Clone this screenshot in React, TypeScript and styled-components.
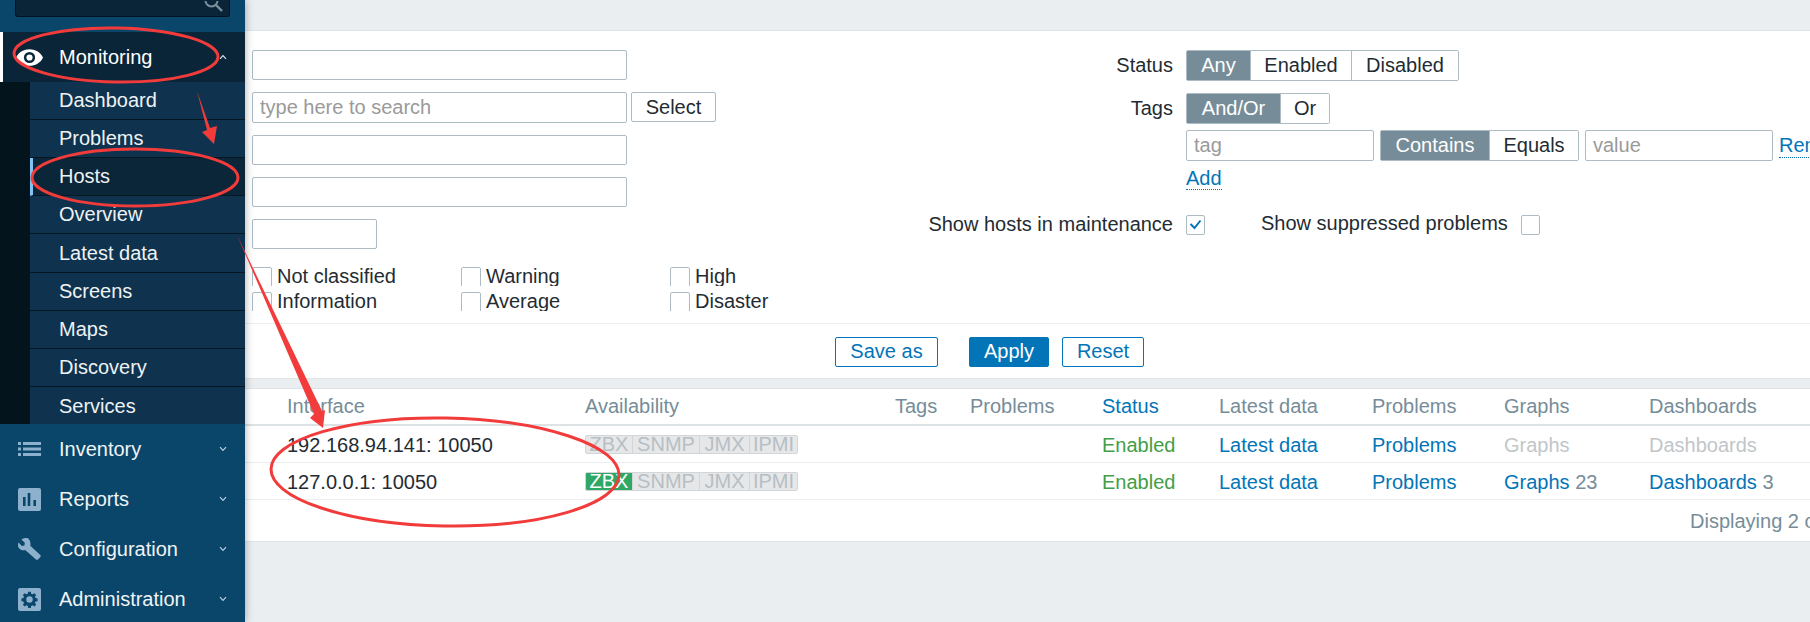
import React from 'react';
import styled, { createGlobalStyle } from 'styled-components';

const Global = createGlobalStyle`
  html, body { margin: 0; padding: 0; height: 622px; overflow: hidden; background: #ebeef0; }
  body { font-family: "Liberation Sans", Arial, sans-serif; font-size: 20px; color: #1f2c33; }
  * { box-sizing: border-box; }
`;

const Page = styled.div`
  position: relative;
  display: flex;
  width: 1810px;
  height: 622px;
  overflow: hidden;
`;

const Sidebar = styled.nav`
  position: relative;
  z-index: 1;
  flex: 0 0 245px;
  height: 622px;
  background: #0a466a;
  box-shadow: 0 0 8px rgba(0, 0, 0, 0.35);
`;

const SearchArea = styled.div`
  height: 32px;
  padding: 0 15px;
`;

const SearchBox = styled.div`
  display: flex;
  justify-content: flex-end;
  align-items: flex-end;
  height: 17px;
  padding: 0 6px 4px 0;
  background: #0a2538;
  border: 1px solid #04141e;
  border-top: 0;
  border-radius: 0 0 3px 3px;
`;

const MenuHead = styled.div<{ $active?: boolean }>`
  display: flex;
  align-items: center;
  height: 50px;
  padding-left: ${p => (p.$active ? '13px' : '18px')};
  background: ${p => (p.$active ? '#0a2538' : 'transparent')};
  border-left: ${p => (p.$active ? '3px solid #fff' : '0')};
  color: ${p => (p.$active ? '#fff' : '#f0f3f5')};
`;

const MenuIcon = styled.span<{ $active?: boolean }>`
  display: flex;
  flex: 0 0 ${p => (p.$active ? '43px' : '41px')};
  align-items: center;
`;

const MenuText = styled.span`
  flex: 1;
`;

const Chevron = styled.svg`
  flex: 0 0 8px;
  margin-right: 18px;
`;

const SubMenu = styled.div`
  height: 342px;
  padding-left: 30px;
  background: #03141d;
`;

const SubItem = styled.div<{ $current?: boolean; $h: number }>`
  display: flex;
  align-items: center;
  height: ${p => p.$h}px;
  padding-left: ${p => (p.$current ? '26px' : '29px')};
  border-left: ${p => (p.$current ? '3px solid #7fc4f5' : '0')};
  border-bottom: 1px solid #041723;
  background: ${p => (p.$current ? '#0b2639' : '#0f334e')};
  color: #eef2f4;
  &:last-child { border-bottom: 0; padding-top: 2px; }
`;

const Main = styled.main`
  flex: 1;
  min-width: 0;
  padding-top: 30px;
`;

const FilterPanel = styled.section`
  height: 349px;
  background: #fff;
  border-top: 1px solid #dfe4e7;
  border-bottom: 1px solid #dfe4e7;
`;

const FilterBody = styled.div`
  display: flex;
  height: 292px;
`;

const LeftCol = styled.div`
  display: flex;
  flex: 0 0 655px;
  flex-direction: column;
  padding: 19px 0 0 7px;
`;

const Field = styled.div<{ $gap: number }>`
  display: flex;
  gap: 4px;
  margin-bottom: ${p => p.$gap}px;
`;

const TextInput = styled.div<{ $w: number; $h?: number }>`
  display: flex;
  align-items: center;
  flex: 0 0 ${p => p.$w}px;
  height: ${p => p.$h ?? 30}px;
  padding-left: 7px;
  background: #fff;
  border: 1px solid #acbbc4;
  border-radius: 2px;
  color: #9a9a9a;
`;

const PlainButton = styled.div`
  display: flex;
  align-items: center;
  justify-content: center;
  width: 85px;
  height: 30px;
  background: #fff;
  border: 1px solid #acbbc4;
  border-radius: 2px;
`;

const SeverityGrid = styled.div`
  display: grid;
  grid-template-columns: repeat(3, 209px);
  grid-auto-rows: 19px;
  row-gap: 6px;
  margin-top: -1px;
`;

const Severity = styled.div`
  display: flex;
  gap: 5px;
  height: 19px;
  overflow: hidden;
  line-height: 19px;
`;

const OpenBox = styled.span`
  flex: 0 0 20px;
  height: 26px;
  border: 1px solid #acbbc4;
  border-radius: 2px;
`;

const RightCol = styled.div`
  display: flex;
  flex: 1;
  flex-direction: column;
  padding-top: 19px;
`;

const FormRow = styled.div<{ $mb: number }>`
  display: flex;
  align-items: center;
  gap: 13px;
  margin-bottom: ${p => p.$mb}px;
`;

const Label = styled.span`
  flex: 0 0 273px;
  text-align: right;
`;

const Seg = styled.div`
  display: flex;
  height: 31px;
  background: #fff;
  border: 1px solid #acbbc4;
  border-radius: 2px;
`;

const SegItem = styled.div<{ $on?: boolean; $w: number }>`
  display: flex;
  align-items: center;
  justify-content: center;
  width: ${p => p.$w}px;
  background: ${p => (p.$on ? '#768d99' : '#fff')};
  color: ${p => (p.$on ? '#fff' : '#1f2c33')};
  & + & { border-left: ${p => (p.$on ? '0' : '1px solid #acbbc4')}; }
`;

const TagRow = styled.div`
  display: flex;
  align-items: center;
  gap: 6px;
  height: 31px;
  margin: -6px 0 0 286px;
  white-space: nowrap;
`;

const Link = styled.span`
  color: #0275b8;
  border-bottom: 1px dotted #0275b8;
  line-height: 24px;
`;

const AddRow = styled.div`
  margin: 4px 0 17px 286px;
  height: 30px;
  padding-top: 1px;
`;

const CheckRow = styled.div`
  display: flex;
  align-items: center;
  gap: 13px;
`;

const CheckBox = styled.span`
  display: flex;
  align-items: center;
  justify-content: center;
  flex: 0 0 19px;
  height: 20px;
  background: #fff;
  border: 1px solid #acbbc4;
  border-radius: 2px;
`;

const SuppressedLabel = styled.span`
  margin-left: 43px;
  padding-bottom: 2px;
`;

const ButtonBar = styled.div`
  display: flex;
  align-items: flex-start;
  height: 55px;
  padding: 13px 0 0 590px;
  border-top: 1px solid #ebeef0;
`;

const ActionButton = styled.div<{ $primary?: boolean; $w: number; $ml: number }>`
  display: flex;
  align-items: center;
  justify-content: center;
  width: ${p => p.$w}px;
  height: 30px;
  padding-bottom: 2px;
  margin-left: ${p => p.$ml}px;
  background: ${p => (p.$primary ? '#0275b8' : '#fff')};
  border: 1px solid #0275b8;
  border-radius: 2px;
  color: ${p => (p.$primary ? '#fff' : '#0275b8')};
`;

const TablePanel = styled.section`
  height: 154px;
  margin-top: 9px;
  background: #fff;
  border-top: 1px solid #dfe4e7;
  border-bottom: 1px solid #dfe4e7;
`;

const Row = styled.div<{ $h: number; $bw: number; $bc: string; $shift?: number }>`
  display: grid;
  grid-template-columns: 298px 310px 75px 132px 117px 153px 132px 145px 1fr;
  align-items: center;
  height: ${p => p.$h}px;
  padding: ${p => p.$shift ?? 0}px 0 0 42px;
  border-bottom: ${p => p.$bw}px solid ${p => p.$bc};
  white-space: nowrap;
`;

const Head = styled.span<{ $link?: boolean }>`
  color: ${p => (p.$link ? '#0275b8' : '#768d99')};
`;

const Cell = styled.span<{ $tone?: 'green' | 'link' | 'mute' }>`
  color: ${p =>
    p.$tone === 'green' ? '#429e47' : p.$tone === 'link' ? '#0275b8' : p.$tone === 'mute' ? '#c1c6c9' : '#1f2c33'};
`;

const Count = styled.span`
  color: #768d99;
`;

const Avail = styled.div`
  display: flex;
  width: 213px;
  height: 19px;
  margin-top: -2px;
  background: #e6e7e8;
  border: 1px solid #d3d6d8;
  border-radius: 2px;
  line-height: 19px;
  overflow: hidden;
`;

const AvailCell = styled.span<{ $w: number; $ok?: boolean }>`
  display: flex;
  justify-content: center;
  align-items: center;
  flex: 0 0 ${p => p.$w}px;
  background: ${p => (p.$ok ? '#2fa866' : 'transparent')};
  color: ${p => (p.$ok ? '#fff' : '#b6bfc4')};
  border-right: 1px solid #d3d6d8;
  &:last-child { border-right: 0; }
`;

const Footer = styled.div`
  padding: 10px 0 0 1445px;
  color: #768d99;
  white-space: nowrap;
`;

const Overlay = styled.svg`
  position: absolute;
  top: 0;
  left: 0;
  z-index: 2;
  pointer-events: none;
`;

const ICON = '#8db1cd';

const Down = () => (
  <Chevron width="8" height="6" viewBox="0 0 8 6">
    <path d="M1 1.2 4 4.4 7 1.2" fill="none" stroke="#b9cfdf" strokeWidth="1.2" />
  </Chevron>
);
const Up = () => (
  <Chevron width="8" height="6" viewBox="0 0 8 6">
    <path d="M1 4.8 4 1.6 7 4.8" fill="none" stroke="#d7e2ea" strokeWidth="1.2" />
  </Chevron>
);

const Eye = () => (
  <svg width="27" height="17" viewBox="0 0 27 17">
    <path d="M0 8.5C5-2.6 22-2.6 27 8.5 22 19.6 5 19.6 0 8.5Z" fill="#fff" />
    <circle cx="13.5" cy="8.5" r="5.6" fill="#0a2538" />
    <circle cx="13.5" cy="8.5" r="3.1" fill="#fff" />
  </svg>
);
const ListIcon = () => (
  <svg width="23" height="14" viewBox="0 0 23 14" fill={ICON}>
    <rect x="0" y="0" width="3" height="3" />
    <rect x="0" y="5.5" width="3" height="3" />
    <rect x="0" y="11" width="3" height="3" />
    <rect x="5" y="0" width="18" height="3" />
    <rect x="5" y="5.5" width="18" height="3" />
    <rect x="5" y="11" width="18" height="3" />
  </svg>
);
const ReportIcon = () => (
  <svg width="23" height="23" viewBox="0 0 23 23">
    <rect width="23" height="23" rx="2" fill={ICON} />
    <rect x="5" y="9" width="2.6" height="9" fill="#0a466a" />
    <rect x="9.7" y="5" width="2.6" height="13" fill="#0a466a" />
    <rect x="15.4" y="12" width="2.6" height="6" fill="#0a466a" />
  </svg>
);
const WrenchIcon = () => (
  <svg width="23" height="22" viewBox="0 0 23 22">
    <path d="M9.4 0C6.6-.4 4.2.8 3.4 1.6l3.4 3.2-.4 2.6-2.6.5L.6 4.6C-.2 6-.2 7.800.4 9.200c1.200 2.500 4 3.700 6.800 2.900l10.800 9.300c.6.500 1.400.5 2 0l2.400-2.400c.5-.6.500-1.400-.1-2L12.300 7.800C13.100 4 11.400.9 9.400 0Z" fill={ICON} />
  </svg>
);
const GearIcon = () => (
  <svg width="23" height="23" viewBox="0 0 23 23">
    <rect width="23" height="23" rx="2" fill={ICON} />
    <path d="M10 3.500h3l.5 2.300 1.600.7 2-1.300 2.100 2.100-1.300 2 .7 1.600 2.300.5v3l-2.300.5-.7 1.600 1.300 2-2.100 2.100-2-1.300-1.600.7-.5 2.300h-3l-.5-2.300-1.600-.7-2 1.300-2.100-2.100 1.300-2-.7-1.600-2.300-.5v-3l2.300-.5.7-1.600-1.300-2 2.100-2.100 2 1.300 1.600-.7Z" transform="translate(11.500 11.500) scale(.86) translate(-11.500 -12.500)" fill="#0a466a" />
    <circle cx="11.500" cy="11.500" r="3.200" fill={ICON} />
  </svg>
);
const Magnifier = () => (
  <svg width="19" height="11" viewBox="0 8 19 11">
    <circle cx="7.5" cy="7.5" r="6" fill="none" stroke="#7e909c" strokeWidth="2" />
    <path d="M12 12l6 6" stroke="#7e909c" strokeWidth="2.4" />
  </svg>
);

const subs: [string, number, boolean?][] = [
  ['Dashboard', 38],
  ['Problems', 38],
  ['Hosts', 38, true],
  ['Overview', 38],
  ['Latest data', 39],
  ['Screens', 38],
  ['Maps', 38],
  ['Discovery', 38],
  ['Services', 37],
];

const bottom: [string, React.ReactNode][] = [
  ['Inventory', <ListIcon />],
  ['Reports', <ReportIcon />],
  ['Configuration', <WrenchIcon />],
  ['Administration', <GearIcon />],
];

const severities = ['Not classified', 'Warning', 'High', 'Information', 'Average', 'Disaster'];

const AvailBar = ({ ok }: { ok?: boolean }) => (
  <Avail>
    <AvailCell $w={47} $ok={ok}>ZBX</AvailCell>
    <AvailCell $w={67}>SNMP</AvailCell>
    <AvailCell $w={50}>JMX</AvailCell>
    <AvailCell $w={47}>IPMI</AvailCell>
  </Avail>
);

export default function App() {
  return (
    <Page>
      <Global />
      <Sidebar>
        <SearchArea>
          <SearchBox><Magnifier /></SearchBox>
        </SearchArea>
        <MenuHead $active>
          <MenuIcon $active><Eye /></MenuIcon>
          <MenuText>Monitoring</MenuText>
          <Up />
        </MenuHead>
        <SubMenu>
          {subs.map(([t, h, c]) => (
            <SubItem key={t} $h={h} $current={c}>{t}</SubItem>
          ))}
        </SubMenu>
        {bottom.map(([t, icon]) => (
          <MenuHead key={t}>
            <MenuIcon>{icon}</MenuIcon>
            <MenuText>{t}</MenuText>
            <Down />
          </MenuHead>
        ))}
      </Sidebar>
      <Main>
        <FilterPanel>
          <FilterBody>
            <LeftCol>
              <Field $gap={12}><TextInput $w={375} /></Field>
              <Field $gap={12}>
                <TextInput $w={375} $h={31}>type here to search</TextInput>
                <PlainButton>Select</PlainButton>
              </Field>
              <Field $gap={12}><TextInput $w={375} /></Field>
              <Field $gap={12}><TextInput $w={375} /></Field>
              <Field $gap={19}><TextInput $w={125} /></Field>
              <SeverityGrid>
                {severities.map(s => (
                  <Severity key={s}><OpenBox />{s}</Severity>
                ))}
              </SeverityGrid>
            </LeftCol>
            <RightCol>
              <FormRow $mb={12}>
                <Label>Status</Label>
                <Seg>
                  <SegItem $on $w={63}>Any</SegItem>
                  <SegItem $w={101}>Enabled</SegItem>
                  <SegItem $w={107}>Disabled</SegItem>
                </Seg>
              </FormRow>
              <FormRow $mb={12}>
                <Label>Tags</Label>
                <Seg>
                  <SegItem $on $w={93}>And/Or</SegItem>
                  <SegItem $w={49}>Or</SegItem>
                </Seg>
              </FormRow>
              <TagRow>
                <TextInput $w={188} $h={31}>tag</TextInput>
                <Seg>
                  <SegItem $on $w={108}>Contains</SegItem>
                  <SegItem $w={89}>Equals</SegItem>
                </Seg>
                <TextInput $w={188} $h={31}>value</TextInput>
                <Link>Remove</Link>
              </TagRow>
              <AddRow><Link>Add</Link></AddRow>
              <CheckRow>
                <Label>Show hosts in maintenance</Label>
                <CheckBox>
                  <svg width="13" height="11" viewBox="0 0 13 11">
                    <path d="M1.5 5 5.500 9 11.500 1.500" fill="none" stroke="#0275b8" strokeWidth="2" />
                  </svg>
                </CheckBox>
                <SuppressedLabel>Show suppressed problems</SuppressedLabel>
                <CheckBox />
              </CheckRow>
            </RightCol>
          </FilterBody>
          <ButtonBar>
            <ActionButton $w={103} $ml={0}>Save as</ActionButton>
            <ActionButton $primary $w={80} $ml={31}>Apply</ActionButton>
            <ActionButton $w={82} $ml={13}>Reset</ActionButton>
          </ButtonBar>
        </FilterPanel>
        <TablePanel>
          <Row $h={37} $bw={2} $bc="#dde2e5">
            <Head>Interface</Head>
            <Head>Availability</Head>
            <Head>Tags</Head>
            <Head>Problems</Head>
            <Head $link>Status</Head>
            <Head>Latest data</Head>
            <Head>Problems</Head>
            <Head>Graphs</Head>
            <Head>Dashboards</Head>
          </Row>
          <Row $h={37} $bw={1} $bc="#ebeef0" $shift={2}>
            <Cell>192.168.94.141: 10050</Cell>
            <AvailBar />
            <span />
            <span />
            <Cell $tone="green">Enabled</Cell>
            <Cell $tone="link">Latest data</Cell>
            <Cell $tone="link">Problems</Cell>
            <Cell $tone="mute">Graphs</Cell>
            <Cell $tone="mute">Dashboards</Cell>
          </Row>
          <Row $h={37} $bw={1} $bc="#ebeef0" $shift={2}>
            <Cell>127.0.0.1: 10050</Cell>
            <AvailBar ok />
            <span />
            <span />
            <Cell $tone="green">Enabled</Cell>
            <Cell $tone="link">Latest data</Cell>
            <Cell $tone="link">Problems</Cell>
            <Cell $tone="link">Graphs <Count>23</Count></Cell>
            <Cell $tone="link">Dashboards <Count>3</Count></Cell>
          </Row>
          <Footer>Displaying 2 of 2 found</Footer>
        </TablePanel>
      </Main>
      <Overlay width="1810" height="622" viewBox="0 0 1810 622">
        <g fill="none" stroke="#f23b3b" strokeWidth="3">
          <ellipse cx="116" cy="55" rx="102" ry="27" transform="rotate(1 116 55)" />
          <ellipse cx="135" cy="177.500" rx="103" ry="28.500" />
          <ellipse cx="445" cy="472" rx="174" ry="54" transform="rotate(1 445 472)" />
        </g>
        <g fill="#f23b3b">
          <path d="M197 91 210 128 217 126 214 144 202 132 207 130Z" />
          <path d="M237 235 322 411 325 410 323 428 310 418 314 414Z" />
        </g>
      </Overlay>
    </Page>
  );
}
